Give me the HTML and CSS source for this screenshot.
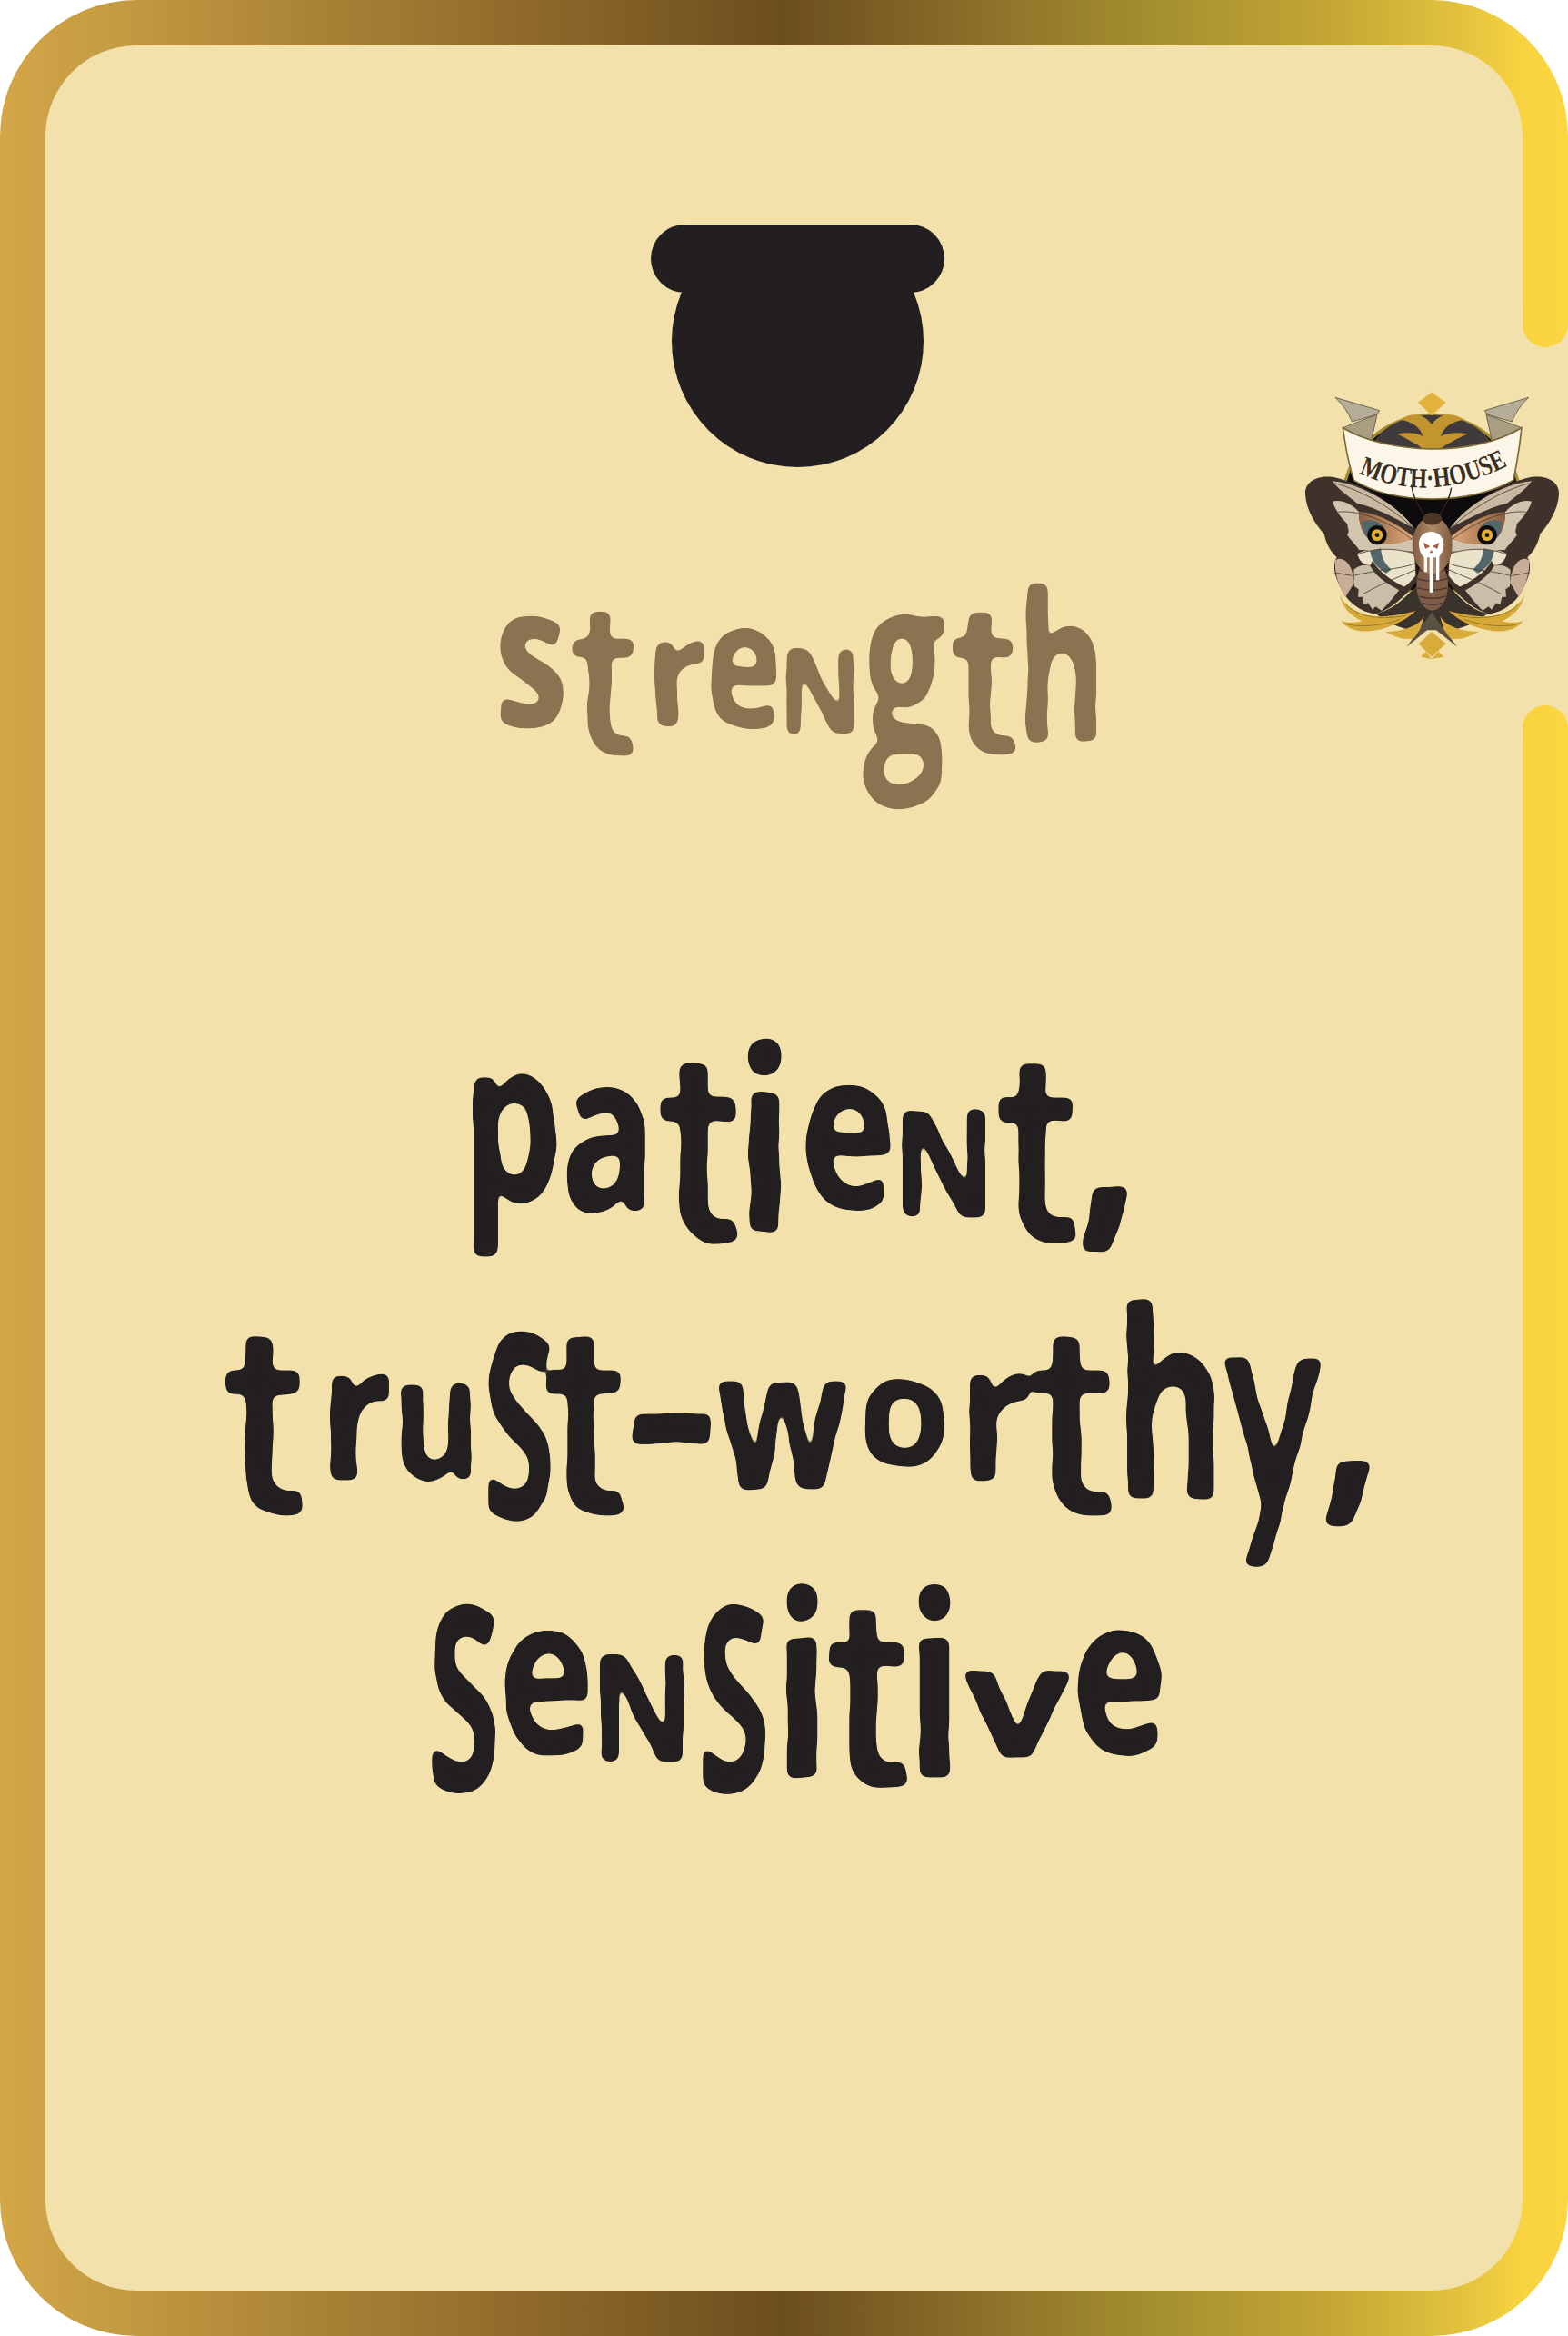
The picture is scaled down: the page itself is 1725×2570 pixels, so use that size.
FILE: index.html
```html
<!DOCTYPE html>
<html lang="en">
<head>
<meta charset="utf-8">
<title>Strength</title>
<link rel="stylesheet" href="styles.css">
</head>
<body>
<svg class="defs" width="0" height="0" aria-hidden="true">
  <filter id="blob" x="-5%" y="-40%" width="110%" height="180%" color-interpolation-filters="sRGB">
    <feTurbulence type="fractalNoise" baseFrequency="0.025" numOctaves="2" seed="4" result="n"/>
    <feDisplacementMap in="SourceGraphic" in2="n" scale="6" xChannelSelector="R" yChannelSelector="G" result="d"/>
    <feGaussianBlur in="d" stdDeviation="5" result="b"/>
    <feComponentTransfer in="b">
      <feFuncA type="linear" slope="14" intercept="-6"/>
    </feComponentTransfer>
  </filter>
</svg>
<main class="card">
  <section class="panel">
    <svg class="pot" viewBox="0 0 323 267" aria-hidden="true">
      <rect x="0" y="0" width="323" height="75" rx="37.5"/>
      <circle cx="161.5" cy="128.5" r="138.5"/>
    </svg>
    <h1 class="title"><span class="g g-s">s</span><span class="g g-t k12">t</span><span class="g g-r k15">r</span><span class="g g-e k7">e</span><span class="g g-n k11">n</span><span class="g g-g k16">g</span><span class="g g-t k11">t</span><span class="g g-h k10">h</span></h1>
    <div class="traits">
      <p class="line"><span class="g g-p">p</span><span class="g g-a k12">a</span><span class="g g-t k12">t</span><span class="g g-i k2">i</span><span class="g g-e k22">e</span><span class="g g-n k11">n</span><span class="g g-t k12">t</span><span class="g g-co k8">,</span></p>
      <p class="line"><span class="g g-t">t</span><span class="g g-r k17">r</span><span class="g g-u k11">u</span><span class="g g-S k16">s</span><span class="g g-t km6">t</span><span class="g g-hy k5">-</span><span class="g g-w k6">w</span><span class="g g-o k17">o</span><span class="g g-r k19">r</span><span class="g g-t k3">t</span><span class="g g-h k11">h</span><span class="g g-y k8">y</span><span class="g g-co k10">,</span></p>
      <p class="line"><span class="g g-S">s</span><span class="g g-e k8">e</span><span class="g g-n k11">n</span><span class="g g-S k19">s</span><span class="g g-i k18">i</span><span class="g g-t k7">t</span><span class="g g-i k3">i</span><span class="g g-v k11">v</span><span class="g g-e k7">e</span></p>
    </div>
  </section>
  <div class="notch"></div>
  <svg class="logo" viewBox="0 0 975 1080" role="img" aria-label="Moth House logo">
    <defs>
      <linearGradient id="eyeband" x1="0" x2="1" y1="0" y2="0">
        <stop offset="0" stop-color="#8a5f3f"/><stop offset="1" stop-color="#e0a878"/>
      </linearGradient>
      <linearGradient id="thorax" x1="0" x2="1" y1="0" y2="0">
        <stop offset="0" stop-color="#7f5b42"/><stop offset=".5" stop-color="#b08a68"/><stop offset="1" stop-color="#7f5b42"/>
      </linearGradient>
      <g id="leaves">
        <path fill="#d5a838" d="M222 758C232 800 275 825 340 835C390 835 440 825 472 816C440 848 390 872 330 882C290 888 250 880 226 850C250 856 275 856 295 850C255 830 225 800 222 758Z"/>
        <path fill="none" stroke="#9a7a25" stroke-width="3" d="M240 790C270 830 340 850 440 832M250 862C300 870 360 865 420 845"/>
        <path fill="#d9ab3a" d="M500 832C490 860 440 885 372 885C410 905 440 915 468 905C485 885 495 860 500 832Z"/>
      </g>
      <g id="wing">
        <path fill="#3e322b" d="M108 430C106 385 160 362 222 380C330 410 420 480 470 545L478 715C440 770 385 815 340 826C290 820 240 785 218 725C200 690 200 655 212 640C185 615 175 585 170 562C140 530 110 480 108 430Z"/>
        <path fill="#c9b8a2" d="M198 388C290 396 410 465 466 542C420 520 345 475 280 462C245 435 212 410 198 388Z"/>
        <path fill="#d2c5ae" d="M198 455C225 448 262 462 285 490C284 540 305 580 345 596C385 600 430 590 465 575L468 620L285 615C278 600 262 590 246 565C258 552 244 540 248 530C222 505 205 478 198 455Z"/>
        <path fill="url(#eyeband)" d="M285 490C335 490 410 525 465 572C435 592 395 600 350 596C310 588 285 550 285 490Z"/>
        <path fill="#52666b" d="M295 522C320 510 352 518 368 540L332 590C308 578 296 552 295 522Z"/>
        <circle cx="345" cy="566" r="32" fill="#0f0d0c"/>
        <circle cx="345" cy="566" r="19" fill="#e3ad38"/>
        <circle cx="345" cy="566" r="7" fill="#14100c"/>
        <path fill="#ebe3c9" d="M280 628C300 610 400 606 468 625L472 700C455 722 440 738 420 742C380 700 345 690 325 665C300 668 285 650 280 628Z"/>
        <path fill="#52666b" d="M322 618L358 610C358 640 370 660 392 680L375 692C345 675 325 650 322 618Z"/>
        <path fill="#c9bfa8" d="M268 680C285 665 305 662 325 668C345 690 385 710 420 745C400 770 385 790 360 815L340 802L330 812L315 790L302 796L296 770L282 770L284 745L270 735Z"/>
        <path fill="#3e322b" d="M330 650C350 690 400 720 445 742L428 754C385 730 345 708 322 668Z"/>
        <path fill="#c9ad98" d="M206 650C225 635 250 650 262 685L270 722L240 772C222 740 205 700 206 650Z"/>
        <g fill="none" stroke="#4a3d33" stroke-width="2.5">
          <path d="M205 395C300 420 400 480 466 545"/>
          <path d="M215 490C290 480 400 530 466 585"/>
          <path d="M280 630C340 605 420 610 468 628"/>
          <path d="M268 700C340 680 420 680 470 660"/>
          <path d="M300 760C370 720 430 700 472 680"/>
          <path d="M205 690L262 700"/>
        </g>
      </g>
    </defs>
    <circle cx="525" cy="465" r="295" fill="#0d0b0b" stroke="#a88a2e" stroke-width="10"/>
    <path fill="#3f3a3b" d="M340 250C380 195 450 170 525 170C600 170 670 195 715 250L700 290H355Z"/>
    <path fill="#c3952f" d="M420 185C470 155 500 170 525 200C550 170 580 155 635 185C590 190 565 210 555 240C585 225 615 228 645 232C605 250 565 270 545 290H505C485 270 445 250 410 232C440 228 470 225 497 240C487 210 460 190 420 185Z"/>
    <path fill="#e3b23c" d="M480 128L525 95L572 128L525 172Z"/>
    <path fill="#f3e1ab" d="M230 760H825V960H230Z"/>
    <path fill="#3a332c" d="M340 825C400 815 450 760 480 730H575C610 760 650 815 710 825C680 850 640 870 590 880L525 860L460 880C410 870 370 850 340 825Z"/>
    <path fill="#5a5141" d="M442 935L505 850L525 820L545 850L610 935L540 880H510Z"/>
    <use href="#leaves"/>
    <use href="#leaves" transform="translate(1053 0) scale(-1 1)"/>
    <path fill="#d9ab3a" d="M482 925L525 885L572 925L525 968ZM490 968L505 950L525 975L548 950L565 968L525 975Z"/>
    <path fill="#b5ad98" stroke="#6d6650" stroke-width="3" d="M207 112L353 155L345 168L262 192C250 160 230 135 207 112Z"/>
    <path fill="#b5ad98" stroke="#6d6650" stroke-width="3" d="M845 112L700 155L708 168L790 192C802 160 822 135 845 112Z"/>
    <path fill="#a99d82" stroke="#6d6650" stroke-width="3" d="M232 212L345 168L325 258Z"/>
    <path fill="#a99d82" stroke="#6d6650" stroke-width="3" d="M822 212L705 168L725 258Z"/>
    <path fill="#fbf6e8" stroke="#7d6a37" stroke-width="5" d="M232 212C380 300 660 310 822 212C815 280 805 335 795 385C660 465 400 470 268 385C250 330 240 270 232 212Z"/>
    <path id="bannerline" fill="none" d="M285 362Q525 470 790 330"/>
    <text class="logo-text"><textPath href="#bannerline" textLength="510" lengthAdjust="spacingAndGlyphs">MOTH·HOUSE</textPath></text>
    <use href="#wing"/>
    <use href="#wing" transform="translate(1053 0) scale(-1 1)"/>
    <path fill="none" stroke="#2e2520" stroke-width="4" d="M500 498C485 470 465 450 458 400M552 498C570 470 585 445 590 410"/>
    <ellipse cx="527" cy="730" rx="52" ry="85" fill="#7e5c45"/>
    <path fill="none" stroke="#4a342a" stroke-width="4" d="M480 680Q527 695 575 680M476 710Q527 726 578 710M478 740Q527 756 576 740M484 768Q527 782 570 768M494 790Q527 802 560 790"/>
    <ellipse cx="527" cy="600" rx="66" ry="95" fill="url(#thorax)"/>
    <ellipse cx="527" cy="512" rx="32" ry="21" fill="#4e3626"/>
    <path fill="#fff" d="M483 595C483 570 500 555 522 555C546 555 565 572 565 597C565 620 552 630 550 640V715H540V640H530V755H518V640H510V688H500V640C490 630 483 615 483 595Z"/>
    <path fill="#a8603a" d="M498 590L520 604L504 612ZM550 590L528 604L544 612ZM524 615L530 625H518Z"/>
  </svg>
</main>
</body>
</html>
```
FILE: styles.css
```css
* { box-sizing: border-box; }
html, body { margin: 0; padding: 0; background: #fff; }
body { width: 1725px; height: 2570px; overflow: hidden; }
.defs { position: absolute; }

.card {
  position: relative;
  width: 1725px;
  height: 2570px;
  padding: 50px;
  border-radius: 150px;
  background: linear-gradient(90deg, #d3a648 0%, #c39a41 8%, #ae8638 18%, #926c2c 32%, #6b4e1e 50%, #8a6f29 62%, #a5902f 74%, #c4a635 85%, #e6c63e 94%, #f8d340 97%, #fcd63f 100%);
}

.panel {
  display: flex;
  flex-direction: column;
  align-items: center;
  height: 2470px;
  padding: 197px 0 0 30px;
  border-radius: 100px;
  background: #f3e1ab;
}

.pot { display: block; width: 323px; height: 267px; fill: #231f20; flex: none; }

.title, .line {
  margin: 0;
  font-family: "Open Sans", sans-serif;
  font-weight: 700;
  white-space: nowrap;
  text-align: center;
  filter: url(#blob);
}

.title {
  --u: 0.8px;
  margin-top: 90px;
  font-size: 200px;
  line-height: 240px;
  color: #8b7250;
}

.traits { margin-top: 239px; }

.line {
  --u: 1px;
  font-size: 250px;
  line-height: 300px;
  height: 300px;
  color: #231f20;
}

.g {
  display: inline-flex;
  justify-content: center;
  width: calc(var(--w) * var(--u));
  margin-left: calc(var(--k, 0) * var(--u));
  line-height: 1;
  transform-origin: 50% var(--base, 88.8%);
  transform: translateY(calc(var(--dy) * var(--u))) scale(var(--sx), var(--sy));
}

/* glyph proportions */
.g-a  { --w: 89;  --sx: .70; --sy: .97;  --dy: 3; }
.g-e  { --w: 96;  --sx: .72; --sy: .98;  --dy: -1; }
.g-g  { --w: 107; --sx: .80; --sy: 1.34; --dy: 31; }
.g-h  { --w: 99;  --sx: .75; --sy: 1.14; --dy: 18; }
.g-i  { --w: 44;  --sx: .85; --sy: 1.12; --dy: 25; }
.g-n  { --w: 93;  --sx: .57; --sy: .655; --dy: 8; text-transform: uppercase; }
.g-o  { --w: 88;  --sx: .67; --sy: .68;  --dy: -18; }
.g-p  { --w: 98;  --sx: .70; --sy: 1;    --dy: -8; }
.g-r  { --w: 74;  --sx: .74; --sy: .84;  --dy: -2; }
.g-s  { --w: 90;  --sx: .82; --sy: 1.09; --dy: -2; }
.g-S  { --w: 70;  --sx: .58; --sy: 1.14; --dy: 41; text-transform: uppercase; }
.g-t  { --w: 92;  --sx: 1.1; --sy: 1.15; --dy: 35; --base: 86.35%; font-family: Inter, sans-serif; font-weight: 500; }
.g-u  { --w: 80;  --sx: .60; --sy: .76;  --dy: -3; }
.g-v  { --w: 116; --sx: .85; --sy: .69;  --dy: 3; }
.g-w  { --w: 147; --sx: .69; --sy: .86;  --dy: 8; }
.g-y  { --w: 110; --sx: .83; --sy: 1.35; --dy: 37; font-family: Lato, sans-serif; }
.g-hy { --w: 84;  --sx: 1.3; --sy: 1.07; --dy: 13; }
.g-co { --w: 45;  --sx: 1.05; --sy: 1.15; --dy: 10; }

/* pair spacing */
.km6 { --k: -6; }
.k2  { --k: 2; }
.k3  { --k: 3; }
.k5  { --k: 5; }
.k6  { --k: 6; }
.k7  { --k: 7; }
.k8  { --k: 8; }
.k10 { --k: 10; }
.k11 { --k: 11; }
.k12 { --k: 12; }
.k15 { --k: 15; }
.k16 { --k: 16; }
.k17 { --k: 17; }
.k18 { --k: 18; }
.k19 { --k: 19; }
.k22 { --k: 22; }

/* gap in the right-hand edge of the frame */
.notch {
  position: absolute;
  top: 342px;
  right: 0;
  width: 50px;
  height: 474px;
  background: #f3e1ab;
}
.notch::before, .notch::after {
  content: "";
  position: absolute;
  left: 0;
  width: 50px;
  height: 40px;
  background: linear-gradient(90deg, #f8d340, #fcd63f);
}
.notch::before { top: 0; border-radius: 0 0 25px 25px; }
.notch::after { bottom: 0; border-radius: 25px 25px 0 0; }

.logo {
  position: absolute;
  top: 400px;
  left: 1400px;
  width: 325px;
  height: 360px;
}
.logo-text {
  font-family: "Liberation Serif", serif;
  font-weight: 700;
  font-size: 92px;
  fill: #3a2f1e;
}
```
